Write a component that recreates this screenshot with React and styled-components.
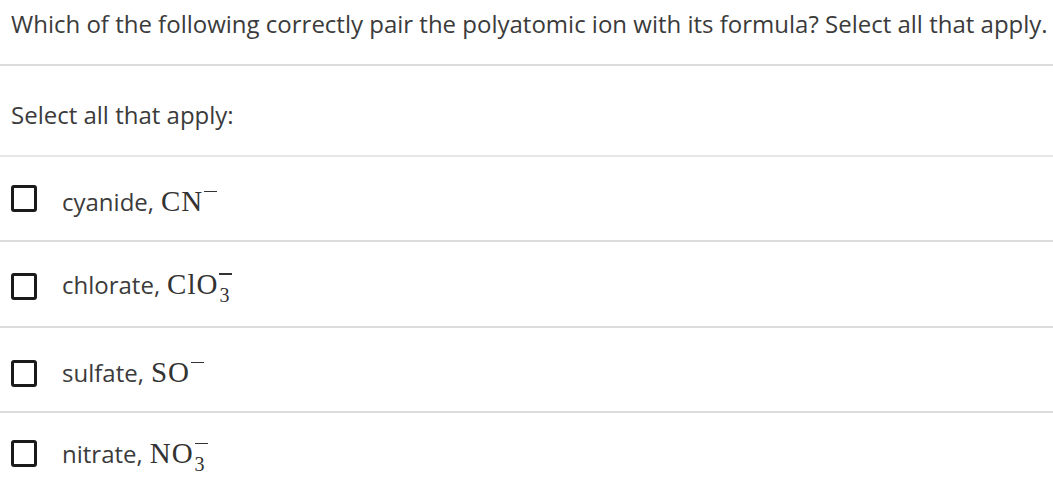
import React from "react";
import styled, { createGlobalStyle } from "styled-components";

const Global = createGlobalStyle`
  html, body { margin: 0; padding: 0; background: #fff; }
  body { font-family: "Open Sans", "Noto Sans", sans-serif; color: #3b3b3b; }
`;

const Page = styled.div`
  display: flex;
  flex-direction: column;
  width: 1053px;
`;

const Question = styled.div`
  padding: 6px 0 0 11px;
  height: 58px;
  font-size: 24px;
  line-height: 36px;
  white-space: nowrap;
  border-bottom: 2px solid #dcdcdc;
`;

const Prompt = styled.div`
  height: 91px;
  display: flex;
  align-items: center;
  padding-left: 11px;
  padding-top: 7px;
  box-sizing: border-box;
  font-size: 24px;
  border-bottom: 2px solid #e6e6e6;
`;

const Option = styled.label`
  display: flex;
  align-items: center;
  gap: 25px;
  height: ${(p) => p.$h}px;
  padding-left: 11px;
  padding-top: ${(p) => p.$pt}px;
  box-sizing: border-box;
  border-bottom: ${(p) => (p.$last ? "none" : "2px solid #dcdcdc")};
  font-size: 24px;
`;

const Box = styled.span`
  width: 26px;
  height: 27px;
  box-sizing: border-box;
  border: 3.5px solid #1a1a1a;
  border-radius: 3px;
  flex: none;
`;

const Label = styled.span`
  white-space: nowrap;
  line-height: 32px;
  position: relative;
  top: ${(p) => p.$dy}px;
`;

const Formula = styled.span`
  font-family: "Liberation Serif", "Times New Roman", serif;
  font-size: 29px;
  letter-spacing: 1px;
  color: #333;
  margin-left: 7px;
`;

const Minus = styled.span`
  display: inline-block;
  width: 13px;
  height: 1.4px;
  background: #333;
  vertical-align: baseline;
  position: relative;
  top: -19px;
  margin-left: 1px;
`;

const Sub = styled.span`
  display: inline-block;
  font-size: 20px;
  letter-spacing: 0;
  position: relative;
  top: 8px;
  margin-left: -13px;
  width: 13px;
`;

function Ion({ base, sub }) {
  return (
    <Formula>
      {base}
      <Minus />
      {sub && <Sub>{sub}</Sub>}
    </Formula>
  );
}

const options = [
  { name: "cyanide,", base: "CN", h: 85, pt: 0, dy: 3 },
  { name: "chlorate,", base: "ClO", sub: "3", h: 86, pt: 4, dy: -1 },
  { name: "sulfate,", base: "SO", h: 85, pt: 8, dy: -1 },
  { name: "nitrate,", base: "NO", sub: "3", h: 65, pt: 16, dy: 1, last: true },
];

export default function App() {
  return (
    <Page>
      <Global />
      <Question>
        Which of the following correctly pair the polyatomic ion with its formula? Select all that apply.
      </Question>
      <Prompt>Select all that apply:</Prompt>
      {options.map((o) => (
        <Option key={o.name} $h={o.h} $pt={o.pt} $last={o.last}>
          <Box />
          <Label $dy={o.dy}>
            {o.name}
            <Ion base={o.base} sub={o.sub} />
          </Label>
        </Option>
      ))}
    </Page>
  );
}
